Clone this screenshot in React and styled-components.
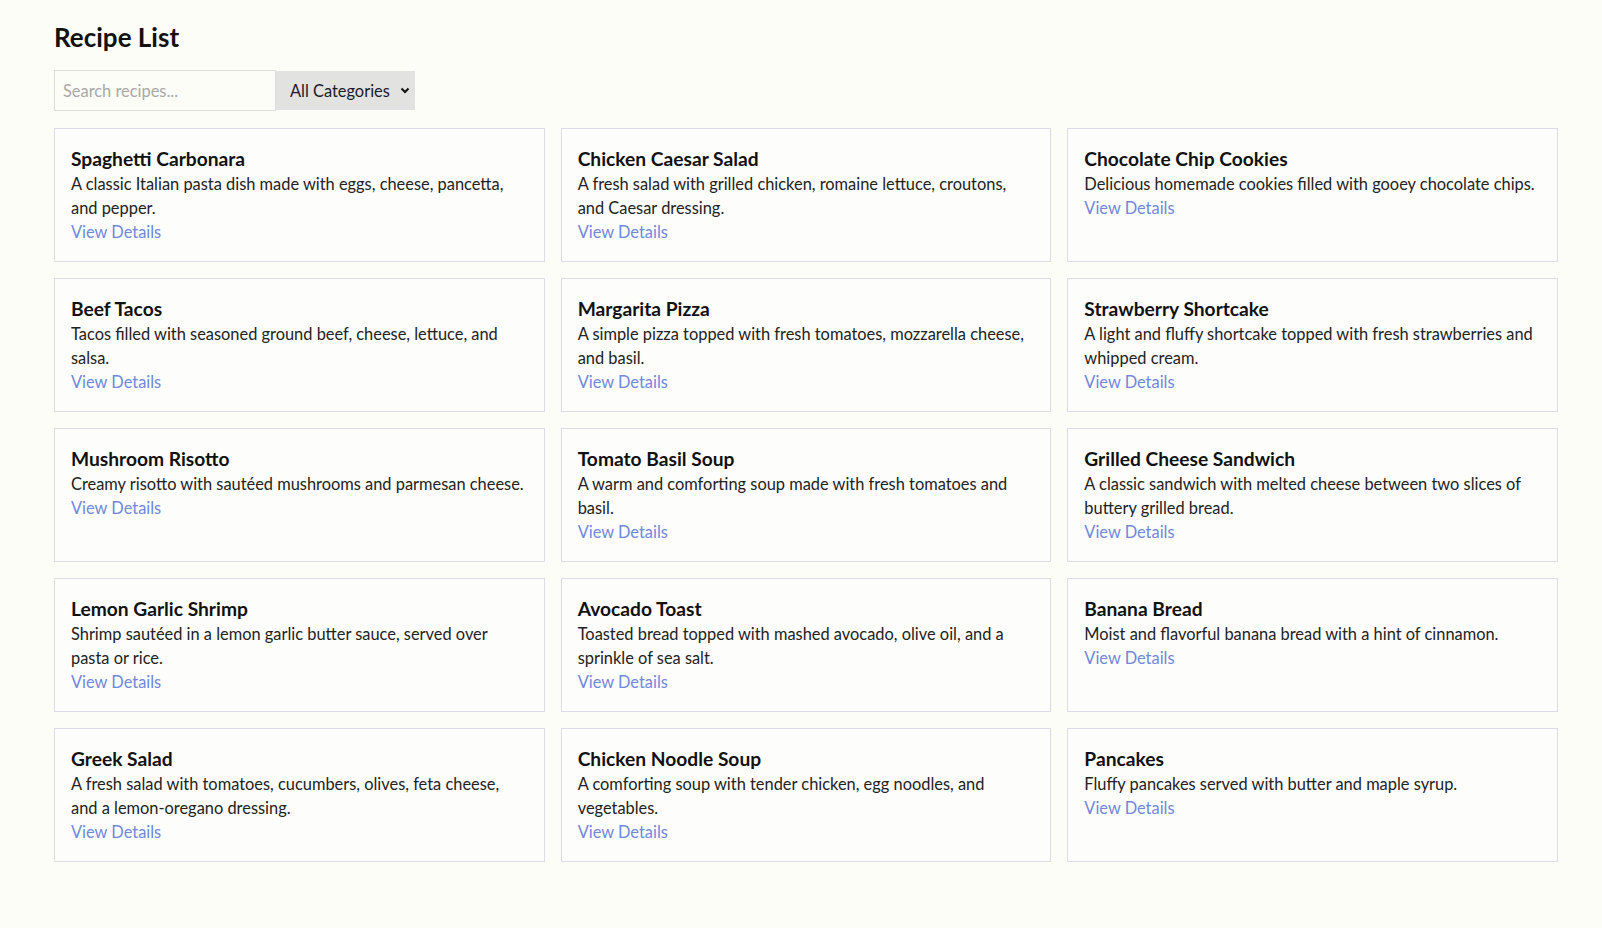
import React, { useState } from 'react'
import styled, { createGlobalStyle } from 'styled-components'

const GlobalStyle = createGlobalStyle`
  html, body {
    margin: 0;
    padding: 0;
    background: #fdfdf8;
  }
  body {
    font-family: Lato, "Open Sans", sans-serif;
    color: #1a1a1a;
  }
`

const Page = styled.div`
  padding: 21px 44px 60px 54px;
`

const Heading = styled.h1`
  margin: 0 0 17px;
  font-size: 26px;
  line-height: 32px;
  font-weight: 700;
  color: #111;
`

const Toolbar = styled.div`
  display: flex;
  align-items: center;
  margin-bottom: 17px;
`

const SearchInput = styled.input`
  width: 222px;
  height: 41px;
  box-sizing: border-box;
  padding: 0 8px;
  border: 1px solid #dcdce2;
  background: #fdfdf8;
  font-family: inherit;
  font-size: 16.4px;
  color: #222;
  outline: none;

  &::placeholder {
    color: #a8a8a8;
  }
`

const SelectWrap = styled.div`
  position: relative;
  display: flex;
`

const Select = styled.select`
  appearance: none;
  width: 139px;
  height: 39px;
  box-sizing: border-box;
  padding: 0 20px 0 14px;
  border: none;
  border-radius: 0;
  background: #e2e2e0;
  font-family: inherit;
  font-size: 16.4px;
  color: #1a1a2a;
  outline: none;
`

const Chevron = styled.svg`
  position: absolute;
  right: 5px;
  top: 16px;
  pointer-events: none;
`

const Grid = styled.div`
  display: grid;
  grid-template-columns: repeat(3, 1fr);
  gap: 16px;
`

const Card = styled.div`
  border: 1px solid #dcdce6;
  padding: 17px 16px;
  background: #fdfdfb;
`

const Title = styled.h3`
  margin: 0;
  font-size: 19.2px;
  line-height: 26px;
  font-weight: 700;
  color: #111;
`

const Description = styled.p`
  margin: 0;
  font-size: 16.4px;
  line-height: 24px;
  color: #222;
`

const DetailsLink = styled.a`
  display: block;
  font-size: 16.4px;
  line-height: 24px;
  color: #7088dc;
  text-decoration: none;
`

const recipes = [
  { name: 'Spaghetti Carbonara', text: 'A classic Italian pasta dish made with eggs, cheese, pancetta, and pepper.' },
  { name: 'Chicken Caesar Salad', text: 'A fresh salad with grilled chicken, romaine lettuce, croutons, and Caesar dressing.' },
  { name: 'Chocolate Chip Cookies', text: 'Delicious homemade cookies filled with gooey chocolate chips.' },
  { name: 'Beef Tacos', text: 'Tacos filled with seasoned ground beef, cheese, lettuce, and salsa.' },
  { name: 'Margarita Pizza', text: 'A simple pizza topped with fresh tomatoes, mozzarella cheese, and basil.' },
  { name: 'Strawberry Shortcake', text: 'A light and fluffy shortcake topped with fresh strawberries and whipped cream.' },
  { name: 'Mushroom Risotto', text: 'Creamy risotto with sautéed mushrooms and parmesan cheese.' },
  { name: 'Tomato Basil Soup', text: 'A warm and comforting soup made with fresh tomatoes and basil.' },
  { name: 'Grilled Cheese Sandwich', text: 'A classic sandwich with melted cheese between two slices of buttery grilled bread.' },
  { name: 'Lemon Garlic Shrimp', text: 'Shrimp sautéed in a lemon garlic butter sauce, served over pasta or rice.' },
  { name: 'Avocado Toast', text: 'Toasted bread topped with mashed avocado, olive oil, and a sprinkle of sea salt.' },
  { name: 'Banana Bread', text: 'Moist and flavorful banana bread with a hint of cinnamon.' },
  { name: 'Greek Salad', text: 'A fresh salad with tomatoes, cucumbers, olives, feta cheese, and a lemon-oregano dressing.' },
  { name: 'Chicken Noodle Soup', text: 'A comforting soup with tender chicken, egg noodles, and vegetables.' },
  { name: 'Pancakes', text: 'Fluffy pancakes served with butter and maple syrup.' },
]

export default function App() {
  const [query, setQuery] = useState('')
  const [category, setCategory] = useState('all')

  const shown = recipes.filter(r => r.name.toLowerCase().includes(query.toLowerCase()))

  return (
    <>
      <GlobalStyle />
      <Page>
        <Heading>Recipe List</Heading>
        <Toolbar>
          <SearchInput
            placeholder="Search recipes..."
            value={query}
            onChange={e => setQuery(e.target.value)}
          />
          <SelectWrap>
            <Select value={category} onChange={e => setCategory(e.target.value)}>
              <option value="all">All Categories</option>
              <option value="main">Main</option>
              <option value="dessert">Dessert</option>
              <option value="soup">Soup</option>
            </Select>
            <Chevron width="10" height="7" viewBox="0 0 10 7">
              <path d="M1.5 1.5 L5 5 L8.5 1.5" fill="none" stroke="#111" strokeWidth="2" />
            </Chevron>
          </SelectWrap>
        </Toolbar>
        <Grid>
          {shown.map(r => (
            <Card key={r.name}>
              <Title>{r.name}</Title>
              <Description>{r.text}</Description>
              <DetailsLink href="#">View Details</DetailsLink>
            </Card>
          ))}
        </Grid>
      </Page>
    </>
  )
}
